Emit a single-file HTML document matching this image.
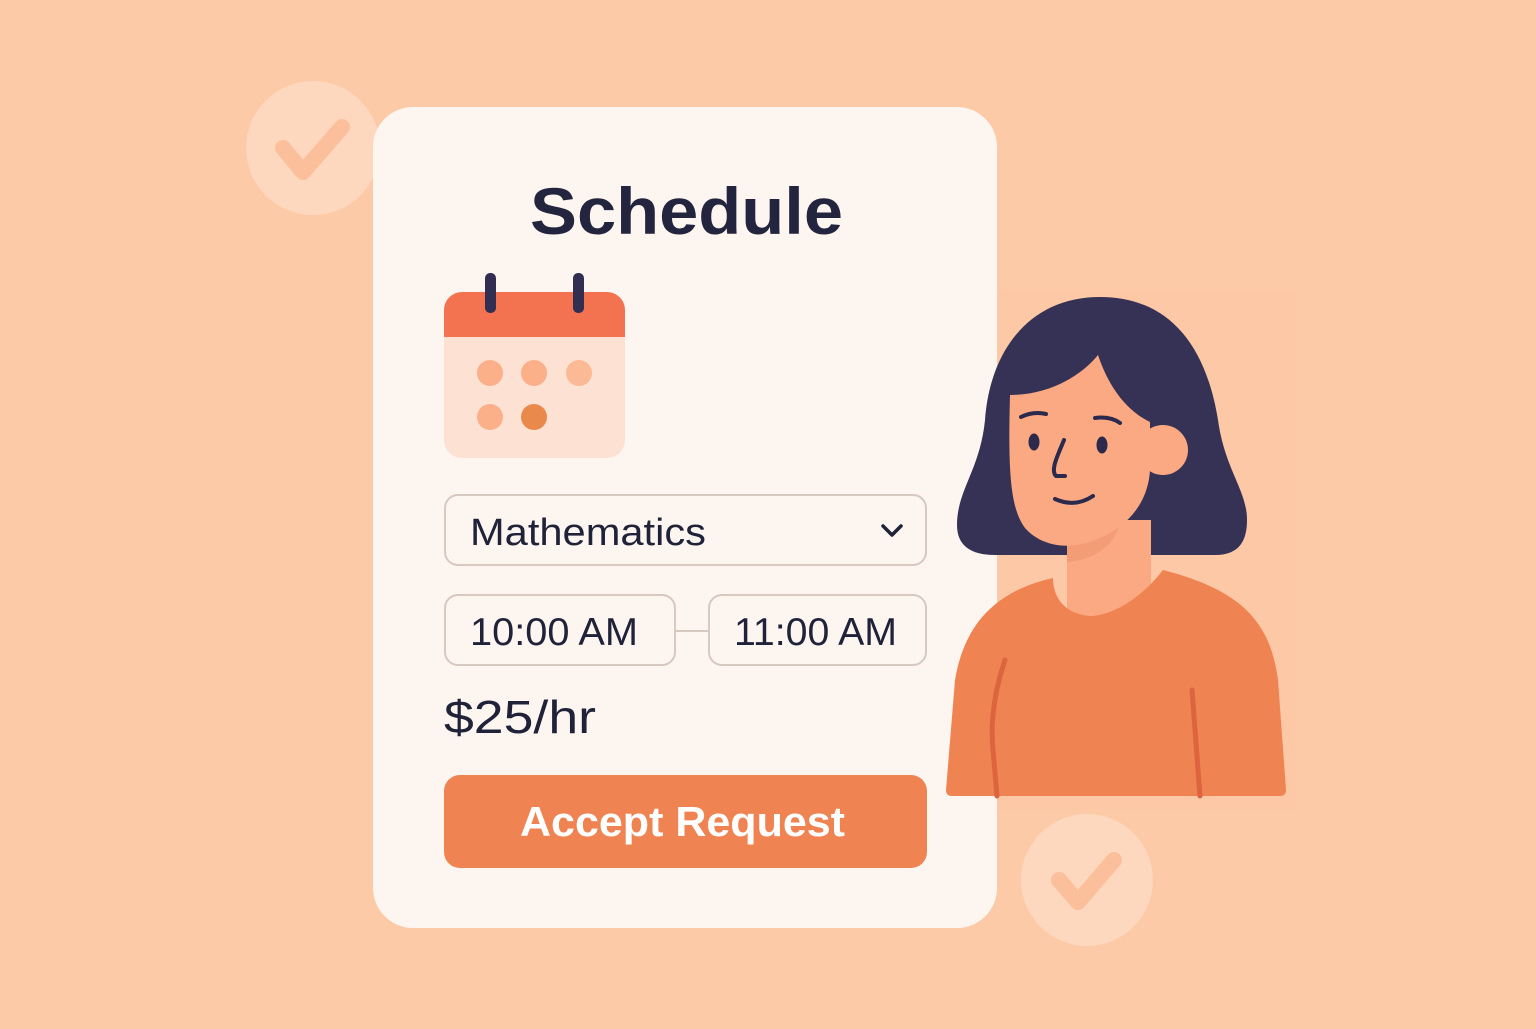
<!DOCTYPE html>
<html><head><meta charset="utf-8"><style>
html,body{margin:0;padding:0;}
body{width:1536px;height:1024px;overflow:hidden;background:#fdcaa8;}
svg text{font-family:"Liberation Sans",sans-serif;}
</style></head><body>
<svg width="1536" height="1024" viewBox="0 0 1536 1024" xmlns="http://www.w3.org/2000/svg">
<rect width="1536" height="1024" fill="#fdcaa8"/>
<circle cx="313" cy="148" r="67" fill="#fdd8be"/>
<path d="M283,148 L303,172 L342,127" fill="none" stroke="#fbbf9b" stroke-width="16" stroke-linecap="round" stroke-linejoin="round"/>
<circle cx="1087" cy="880" r="66" fill="#fdd8be"/>
<path d="M1059,880 L1078,902 L1114,860" fill="none" stroke="#fbbf9b" stroke-width="16" stroke-linecap="round" stroke-linejoin="round"/>
<rect x="997" y="290" width="300" height="520" fill="#fcc5a2" opacity="0.5"/>
<rect x="373" y="107" width="624" height="821" rx="40" fill="#fdf5ef"/>
<text x="530" y="234" font-size="66" font-weight="bold" fill="#23253f" textLength="313" lengthAdjust="spacingAndGlyphs">Schedule</text>
<rect x="444" y="292" width="181" height="166" rx="18" fill="#fde1d2"/>
<path d="M462,292 H607 A18,18 0 0 1 625,310 V337 H444 V310 A18,18 0 0 1 462,292 Z" fill="#f37350"/>
<rect x="485" y="273" width="11" height="40" rx="5" fill="#322e52"/>
<rect x="573" y="273" width="11" height="40" rx="5" fill="#322e52"/>
<circle cx="490" cy="373" r="13" fill="#fbb08a"/>
<circle cx="534" cy="373" r="13" fill="#fbb08a"/>
<circle cx="579" cy="373" r="13" fill="#fbb995"/>
<circle cx="490" cy="417" r="13" fill="#fbb08a"/>
<circle cx="534" cy="417" r="13" fill="#e98a4c"/>
<rect x="445" y="495" width="481" height="70" rx="13" fill="none" stroke="#d7c8c0" stroke-width="2"/>
<text x="470" y="545" font-size="38" fill="#1f2238" textLength="236" lengthAdjust="spacingAndGlyphs">Mathematics</text>
<path d="M883,526 L892,535 L901,526" fill="none" stroke="#1f2238" stroke-width="3.5" stroke-linecap="round" stroke-linejoin="round"/>
<rect x="445" y="595" width="230" height="70" rx="13" fill="none" stroke="#d7c8c0" stroke-width="2"/>
<rect x="709" y="595" width="217" height="70" rx="13" fill="none" stroke="#d7c8c0" stroke-width="2"/>
<line x1="675" y1="631" x2="709" y2="631" stroke="#d7c8c0" stroke-width="2"/>
<text x="470" y="645" font-size="39" fill="#1f2238" textLength="168" lengthAdjust="spacingAndGlyphs">10:00 AM</text>
<text x="734" y="645" font-size="39" fill="#1f2238" textLength="163" lengthAdjust="spacingAndGlyphs">11:00 AM</text>
<text x="444" y="733" font-size="46" fill="#1f2238" textLength="152" lengthAdjust="spacingAndGlyphs">$25/hr</text>
<rect x="444" y="775" width="483" height="93" rx="16" fill="#f08352"/>
<text x="520" y="836" font-size="42" font-weight="bold" fill="#ffffff" textLength="325" lengthAdjust="spacingAndGlyphs">Accept Request</text>
<path d="M1100,297 C1030,297 990,350 985,420 C980,470 957,490 957,525 C957,545 970,555 995,555 L1215,555 C1240,555 1247,540 1247,520 C1247,490 1225,470 1218,420 C1205,340 1165,297 1100,297 Z" fill="#353255"/>
<rect x="1067" y="520" width="84" height="100" fill="#fba982"/>
<path d="M1067,545 C1090,540 1110,530 1120,522 C1115,545 1095,560 1067,562 Z" fill="#f39c76"/>
<path d="M1010,395 C1050,395 1082,375 1098,355 C1108,385 1125,410 1150,422 L1150,470 C1148,505 1125,530 1090,542 C1065,550 1040,545 1025,528 C1010,508 1008,470 1010,395 Z" fill="#fba982"/>
<circle cx="1163" cy="450" r="25" fill="#fba982"/>
<path d="M1053,578 C1000,590 965,620 955,680 L946,790 Q946,796 952,796 L1280,796 Q1286,796 1286,790 L1278,680 C1270,620 1240,590 1163,570 C1140,600 1110,616 1090,616 C1065,614 1053,598 1053,578 Z" fill="#f08352"/>
<path d="M1005,660 C995,690 990,720 993,750 L997,796" fill="none" stroke="#dc6540" stroke-width="5" stroke-linecap="round"/>
<path d="M1192,690 L1200,796" fill="none" stroke="#dc6540" stroke-width="5" stroke-linecap="round"/>
<path d="M1021,417 Q1033,411 1046,414" fill="none" stroke="#2b2a4c" stroke-width="4" stroke-linecap="round"/>
<path d="M1095,418 Q1110,416 1120,423" fill="none" stroke="#2b2a4c" stroke-width="4" stroke-linecap="round"/>
<ellipse cx="1034" cy="442" rx="5.5" ry="8.5" fill="#2b2a4c"/>
<ellipse cx="1102" cy="445" rx="5.5" ry="8.5" fill="#2b2a4c"/>
<path d="M1064,440 C1058,455 1050,470 1056,476 L1065,476" fill="none" stroke="#2b2a4c" stroke-width="4" stroke-linecap="round"/>
<path d="M1055,499 Q1075,508 1093,496" fill="none" stroke="#2b2a4c" stroke-width="4" stroke-linecap="round"/>
</svg>
</body></html>
